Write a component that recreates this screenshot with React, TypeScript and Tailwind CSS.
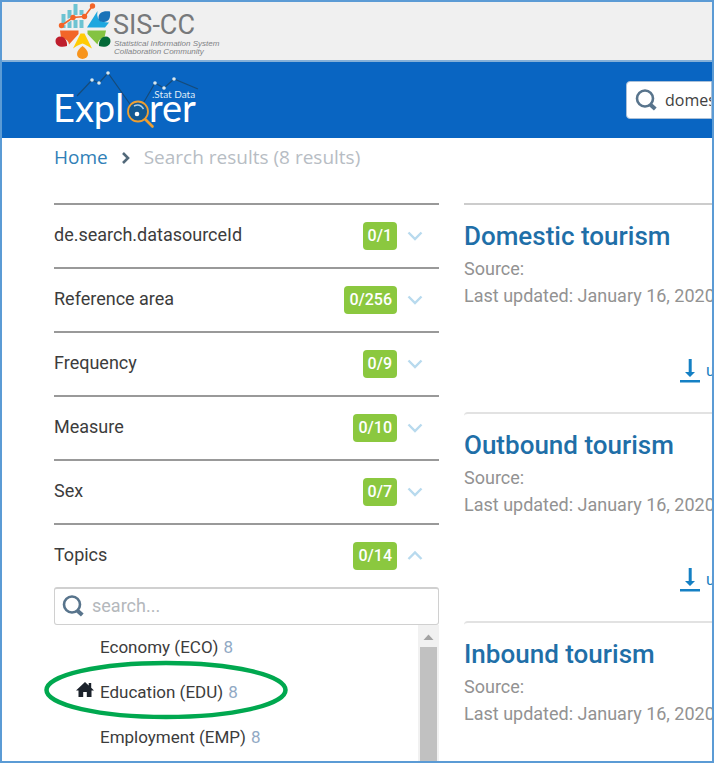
import React from "react";

const facets = [
  { label: "de.search.datasourceId", count: "0/1" },
  { label: "Reference area", count: "0/256" },
  { label: "Frequency", count: "0/9" },
  { label: "Measure", count: "0/10" },
  { label: "Sex", count: "0/7" },
  { label: "Topics", count: "0/14", open: true },
];

const topics = [
  { label: "Economy (ECO)", count: 8 },
  { label: "Education (EDU)", count: 8, home: true },
  { label: "Employment (EMP)", count: 8 },
];

const results = ["Domestic tourism", "Outbound tourism", "Inbound tourism"];

function SearchIcon() {
  return (
    <svg className="h-[22px] w-[22px] shrink-0" viewBox="0 0 22 22" fill="none" stroke="#58748c" aria-hidden="true">
      <circle cx="10" cy="9.5" r="8" strokeWidth="2.6" />
      <path d="M15.2 15.4 20.3 20" strokeWidth="4" />
    </svg>
  );
}

function Chevron({ open }: { open?: boolean }) {
  return (
    <svg className="h-3 w-4 shrink-0" viewBox="0 0 16 12" fill="none" stroke="#b8daee" strokeWidth="2.4" aria-hidden="true">
      <path d={open ? "M1.5 9 8 2.5 14.5 9" : "M1.5 2.5 8 9 14.5 2.5"} />
    </svg>
  );
}

function SisLogo() {
  return (
    <svg className="h-[58px] w-[170px]" viewBox="54 2 170 58" role="img" aria-label="SIS-CC">
      <g fill="#6cc3d2">
        <path d="M61.500 14h4v9l-4 2zM67.500 10h4v7l-4 2zM73.500 4h4v11h-4zM79.500 10h4v5h-4z" />
        <path d="M63 28v-2l2.500-1.500V28zM67.500 28v-5l4-2.500V28zM73.500 28v-8h4v8zM79.500 28v-8h4v8z" />
      </g>
      <path d="m61.500 25.500 11.500-8 11.500-1 8-10.500" fill="none" stroke="#f26529" strokeWidth="1.600" />
      <g fill="#f26529">
        <circle cx="61.500" cy="25.500" r="2.700" />
        <circle cx="73" cy="17.500" r="2.700" />
        <circle cx="84.500" cy="16.500" r="2.700" />
        <circle cx="92.500" cy="6" r="2.700" />
        <path d="M60 30.500h18.500v3.500L69 44.500q0-5-8-7z" />
      </g>
      <path d="M87 27.500 97.500 11q-1.500 8 4.500 10.500 3 1 7 1l-4 5z" fill="#1fa7df" />
      <path d="M87.500 34v-3.500H106l-1.500 7q-6 1-7 7z" fill="#84c341" />
      <path d="M80.500 33.500h4l7.500 15q-5-3-7-4l-2.500-1-2.500 1q-3 1-7 4z" fill="#ffcb05" />
      <path d="M98.500 18c0-5 4-7.500 11.500-6.500 1 7-2 10.500-6 10.500-3.500 0-5.500-1-5.500-4z" fill="#1a73b8" />
      <path d="M55.500 41c0-4 4-5.500 7-4 3 1 5 5 4.500 9-6 2-11.500 0-11.500-5z" fill="#be1e2d" />
      <path d="M110.500 41c0-4-4-5.500-7-4-3 1-5 5-4.500 9 6 2 11.500 0 11.500-5z" fill="#046a38" />
      <path d="M82.500 46c3 2 5.500 5 5.500 8a5.500 5 0 0 1-11 0c0-3 2.500-6 5.500-8z" fill="#f7941d" />
      <text x="113" y="34" fontSize="27" fill="#77797b" className="font-['Roboto',sans-serif]">SIS-CC</text>
      <g fill="#808285" fontSize="8" fontStyle="italic" className="font-['Liberation_Sans',sans-serif]">
        <text x="114" y="46">Statistical Information System</text>
        <text x="114" y="54">Collaboration Community</text>
      </g>
    </svg>
  );
}

function ExplorerLogo() {
  const dots = [[92, 80], [99, 83], [108, 73], [155, 83], [164, 88], [174, 79]];
  return (
    <svg className="h-16 w-[150px]" viewBox="54 68 150 64" role="img" aria-label=".Stat Data Explorer">
      <path d="M77 96 92 80l7 3 9-10 29 41 18-31 9 5 10-9 24 10" fill="none" stroke="#164b79" strokeWidth="1.200" />
      <g fill="#d9e7ed">
        {dots.map(([cx, cy]) => <circle key={cx} cx={cx} cy={cy} r="1.800" />)}
      </g>
      <g fill="#fff" fontSize="38" className="font-['Lato',sans-serif] font-normal">
        <text x="53" y="122">Expl</text>
        <text x="149" y="122">rer</text>
      </g>
      <text x="152" y="98" fontSize="10" fill="#dfebf7" className="font-['Lato',sans-serif]">.Stat Data</text>
      <circle cx="138" cy="111.500" r="10" fill="#125993" stroke="#ee9f32" strokeWidth="1.800" />
      <path d="m145.500 119.500 7 7" stroke="#ee9f32" strokeWidth="2.600" strokeLinecap="round" />
      <path d="M134 106q6-3 9.500 3" fill="none" stroke="#a8cfed" strokeWidth="1.500" />
      <circle cx="137" cy="114" r="2.300" fill="#fff" />
    </svg>
  );
}

export default function App() {
  return (
    <div className="flex h-screen flex-col overflow-hidden border-2 border-[#5b9bd5] bg-white font-['Roboto',sans-serif] text-[#3c3c3c]">
      <header className="shrink-0">
        <div className="flex h-[60px] items-start border-b-2 border-[#85b0d8] bg-[#f0f0f0] pl-[52px]">
          <SisLogo />
        </div>
        <div className="flex h-[76px] items-center justify-between bg-[#0965c2] pl-[52px]">
          <ExplorerLogo />
          <label className="flex h-[38px] w-[86px] shrink-0 items-center gap-2 overflow-hidden rounded-l border border-[#aac0d8] bg-white pl-2">
            <SearchIcon />
            <input aria-label="Search data" defaultValue="domestic" className="w-40 shrink-0 bg-transparent font-['Open_Sans',sans-serif] text-base text-[#414141] outline-none" />
          </label>
        </div>
      </header>

      <nav aria-label="Breadcrumb" className="flex h-[65px] shrink-0 items-start gap-3.5 pt-1.5 pl-[52px] font-['Open_Sans',sans-serif] text-[19px] leading-[26px]">
        <a href="#home" className="text-[#3080b7]">Home</a>
        <svg className="mt-2 h-3 w-2" viewBox="0 0 8 12" fill="none" stroke="#52697a" strokeWidth="2.600" aria-hidden="true"><path d="m1 1 5 5-5 5" /></svg>
        <span className="text-[#b7bdc4]">Search results (8 results)</span>
      </nav>

      <main className="flex min-h-0 flex-1 gap-[25px] pl-[52px]">
        <aside className="flex w-[385px] shrink-0 flex-col">
          {facets.map((facet) => (
            <button key={facet.label} type="button" aria-expanded={!!facet.open} className="flex h-16 w-full shrink-0 items-center border-t-2 border-[#999] pr-4 text-left text-lg">
              <span className="flex-1 pb-0.5">{facet.label}</span>
              <span className="mr-2.5 flex h-7 items-center rounded bg-[#8bc83f] px-[5px] text-base font-medium text-white">{facet.count}</span>
              <Chevron open={facet.open} />
            </button>
          ))}
          <label className="flex h-[38px] shrink-0 items-center gap-2 rounded-[3px] border border-t-2 border-[#d0d0d0] pb-0.5 pl-[7px]">
            <SearchIcon />
            <input aria-label="Search topics" placeholder="search..." className="min-w-0 flex-1 bg-transparent text-lg outline-none placeholder:text-[#b4b8bc]" />
          </label>
          <div className="flex min-h-0 flex-1">
            <ul className="flex-1 text-[17px]">
              {topics.map((topic) => (
                <li key={topic.label} className="relative flex h-[45px] items-center gap-[5px] pl-[46px]">
                  {topic.home && (
                    <>
                      <svg className="absolute top-3 left-[22px] h-4 w-[18px]" viewBox="0 0 18 16" fill="#1b222b" aria-hidden="true">
                        <path d="M9 0 0 8.500h2.500V15h4.700v-5h3.600v5h4.700V8.500H18l-2.800-2.700V1h-2.500v2.500z" />
                      </svg>
                      <svg className="pointer-events-none absolute -top-2.5 -left-2.5 h-[60px] w-[244px]" viewBox="0 0 244 60" aria-hidden="true">
                        <ellipse cx="122" cy="30" rx="119.500" ry="27" fill="none" stroke="#00a84f" strokeWidth="4.500" />
                      </svg>
                    </>
                  )}
                  <span>{topic.label}</span>
                  <span className="text-[#91a9c4]">{topic.count}</span>
                </li>
              ))}
            </ul>
            <div aria-hidden="true" className="flex w-[21px] flex-col bg-[#f1f1f1]">
              <svg className="h-[22px] w-full shrink-0" viewBox="0 0 21 22" fill="#a3a3a3"><path d="m5.500 15 5-5.500 5 5.500z" /></svg>
              <div className="mr-0.5 ml-0.5 flex-1 bg-[#c1c1c1]" />
            </div>
          </div>
        </aside>

        <section aria-label="Results" className="min-w-0 flex-1 overflow-hidden">
          {results.map((title, index) => (
            <article key={title} className={index === 0 ? "h-[209px] border-t-2 border-[#ccc] pt-[15px]" : "h-[209px] rounded-tl border-t-2 border-[#e2e2e2] pt-[15px]"}>
              <h2 className="text-[26px] leading-8 font-medium whitespace-nowrap text-[#1f6fa8]">{title}</h2>
              <div className="pt-[3px] text-lg leading-[27px] whitespace-nowrap text-[#929292]">
                <p>Source:</p>
                <p>Last updated: January 16, 2020</p>
              </div>
              <button type="button" className="mt-[50px] ml-[216px] flex items-center gap-1.5 text-base whitespace-nowrap text-[#1b7fc1]">
                <svg className="h-6 w-5 shrink-0" viewBox="0 0 20 24" fill="#1580c4" aria-hidden="true">
                  <path d="M8.700 0h3v13H15l-5 5-5-5h3.700zM0 21h20v2.500H0z" />
                </svg>
                <span>unfiltered data</span>
              </button>
            </article>
          ))}
        </section>
      </main>
    </div>
  );
}
